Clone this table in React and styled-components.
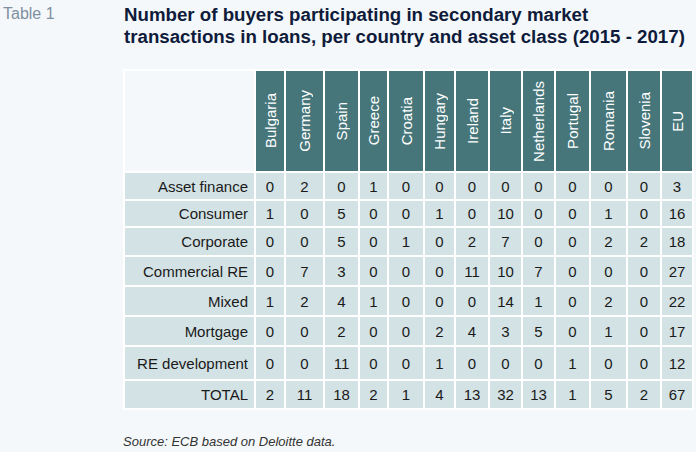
import React from 'react';
import styled, { createGlobalStyle } from 'styled-components';

const countries = [
    'Bulgaria', 'Germany', 'Spain', 'Greece', 'Croatia', 'Hungary', 'Ireland',
    'Italy', 'Netherlands', 'Portugal', 'Romania', 'Slovenia', 'EU',
];

const rows = [
    ['Asset finance', [0, 2, 0, 1, 0, 0, 0, 0, 0, 0, 0, 0, 3]],
    ['Consumer', [1, 0, 5, 0, 0, 1, 0, 10, 0, 0, 1, 0, 16]],
    ['Corporate', [0, 0, 5, 0, 1, 0, 2, 7, 0, 0, 2, 2, 18]],
    ['Commercial RE', [0, 7, 3, 0, 0, 0, 11, 10, 7, 0, 0, 0, 27]],
    ['Mixed', [1, 2, 4, 1, 0, 0, 0, 14, 1, 0, 2, 0, 22]],
    ['Mortgage', [0, 0, 2, 0, 0, 2, 4, 3, 5, 0, 1, 0, 17]],
    ['RE development', [0, 0, 11, 0, 0, 1, 0, 0, 0, 1, 0, 0, 12]],
    ['TOTAL', [2, 11, 18, 2, 1, 4, 13, 32, 13, 1, 5, 2, 67]],
];

export default function App() {
    return (
        <>
            <GlobalStyle />
            <Page>
                <TableTag>Table 1</TableTag>
                <Content>
                    <Title>
                        Number of buyers participating in secondary market<br />
                        transactions in loans, per country and asset class (2015 - 2017)
                    </Title>
                    <Grid>
                        <Corner />
                        {countries.map(c => (
                            <HeadCell key={c}>
                                <HeadText>{c}</HeadText>
                            </HeadCell>
                        ))}
                        {rows.map(([label, values]) => (
                            <React.Fragment key={label}>
                                <LabelCell>{label}</LabelCell>
                                {values.map((v, i) => (
                                    <NumCell key={i}>{v}</NumCell>
                                ))}
                            </React.Fragment>
                        ))}
                    </Grid>
                    <Source>Source: ECB based on Deloitte data.</Source>
                </Content>
            </Page>
        </>
    );
}

const GlobalStyle = createGlobalStyle`
    html, body {
        margin: 0;
        padding: 0;
        background: #f4f8fa;
    }
    body {
        font-family: "Liberation Sans", Arial, sans-serif;
    }
`;

const Page = styled.div`
    display: flex;
    width: 696px;
    height: 452px;
    background: #f4f8fa;
    overflow: hidden;
`;

const TableTag = styled.div`
    width: 120px;
    padding: 5px 0 0 3px;
    font-size: 16px;
    line-height: 18px;
    color: #7f8fa2;
`;

const Content = styled.div`
    display: flex;
    flex-direction: column;
`;

const Title = styled.h1`
    margin: 4px 0 0 1px;
    font-size: 18.7px;
    line-height: 22px;
    font-weight: bold;
    color: #0f1b3b;
    white-space: nowrap;
`;

const Grid = styled.div`
    display: grid;
    grid-template-columns: 129px 28px 37px 33px 27px 34px 29px 32px 31px 31px 33px 35px 32px 30px;
    grid-template-rows: 100px 26px 25px 27px 28px 28px 28px 32px 27px;
    gap: 2px;
    padding: 2px;
    margin-top: 21px;
    width: max-content;
    background: #ffffff;
`;

const Corner = styled.div`
    background: #f4f8fa;
`;

const HeadCell = styled.div`
    display: flex;
    align-items: center;
    justify-content: center;
    background: #46767a;
`;

const HeadText = styled.span`
    writing-mode: vertical-rl;
    transform: rotate(180deg);
    font-size: 15px;
    color: #ffffff;
    white-space: nowrap;
`;

const LabelCell = styled.div`
    display: flex;
    align-items: center;
    justify-content: flex-end;
    padding-right: 6px;
    background: #d3e2e4;
    font-size: 15px;
    color: #1a1a1a;
    white-space: nowrap;
`;

const NumCell = styled.div`
    display: flex;
    align-items: center;
    justify-content: center;
    background: #d3e2e4;
    font-size: 15px;
    color: #1a1a1a;
`;

const Source = styled.p`
    margin: 24px 0 0 0;
    font-size: 13px;
    line-height: 15px;
    font-style: italic;
    color: #333333;
`;
